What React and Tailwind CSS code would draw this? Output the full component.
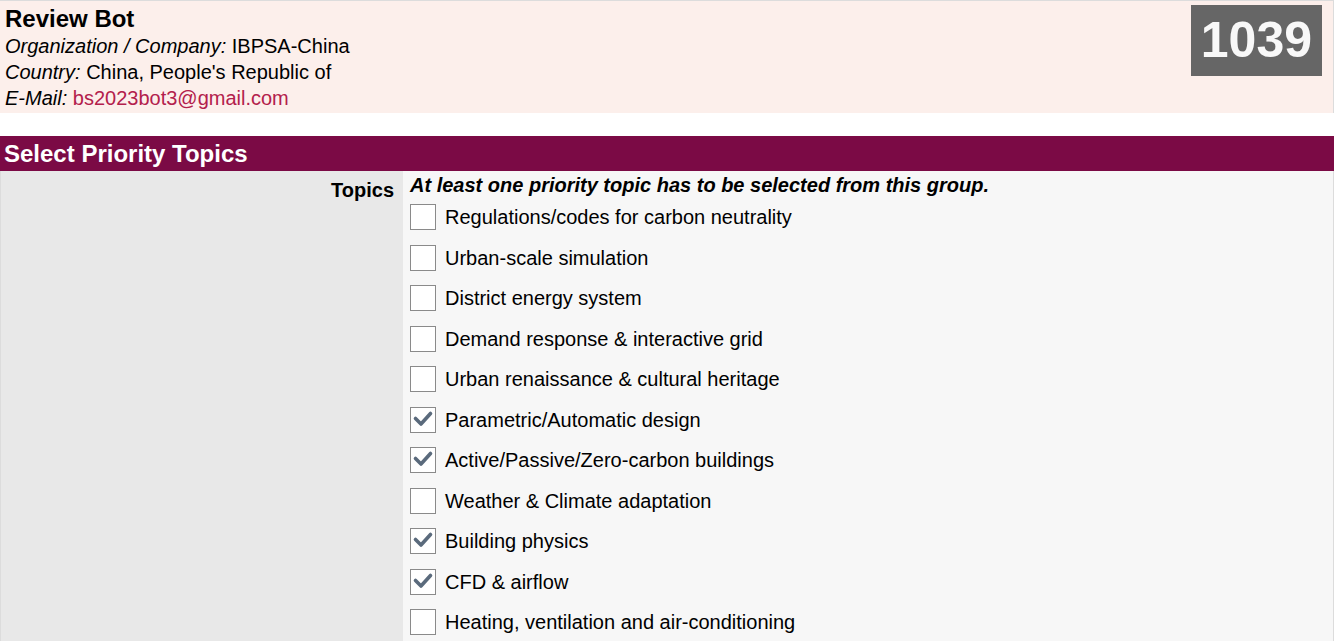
import { useState } from 'react'

const topics = [
    { label: 'Regulations/codes for carbon neutrality', checked: false },
    { label: 'Urban-scale simulation', checked: false },
    { label: 'District energy system', checked: false },
    { label: 'Demand response & interactive grid', checked: false },
    { label: 'Urban renaissance & cultural heritage', checked: false },
    { label: 'Parametric/Automatic design', checked: true },
    { label: 'Active/Passive/Zero-carbon buildings', checked: true },
    { label: 'Weather & Climate adaptation', checked: false },
    { label: 'Building physics', checked: true },
    { label: 'CFD & airflow', checked: true },
    { label: 'Heating, ventilation and air-conditioning', checked: false },
]

function CheckBox({ checked, onToggle }) {
    return (
        <button
            type="button"
            onClick={onToggle}
            className="w-[26px] h-[26px] flex-shrink-0 bg-white border border-[#8a8a8a] flex items-center justify-center"
        >
            {checked && (
                <svg width="24" height="24" viewBox="0 0 24 24">
                    <path d="M4.5 10.5 L10 16 L19.5 5.5" fill="none" stroke="#5a6a7c" strokeWidth="3.6" strokeLinecap="round" strokeLinejoin="round" />
                </svg>
            )}
        </button>
    )
}

export default function App() {
    const [items, setItems] = useState(topics)

    const toggle = (i) => {
        setItems(items.map((t, j) => (j === i ? { ...t, checked: !t.checked } : t)))
    }

    return (
        <div className="min-h-screen bg-white text-black font-['Liberation_Sans',Arial,sans-serif]">
            {/* Header */}
            <div className="flex justify-between items-start bg-[#fcefeb] border-t border-r border-[#dcdcdc] pl-[5px] pr-[11px] pt-[3px] pb-[2px]">
                <div>
                    <h1 className="text-[24px] leading-[29px] font-bold">Review Bot</h1>
                    <p className="text-[20px] leading-[26px]">
                        <i>Organization / Company:</i> IBPSA-China
                    </p>
                    <p className="text-[20px] leading-[26px]">
                        <i>Country:</i> China, People's Republic of
                    </p>
                    <p className="text-[20px] leading-[26px]">
                        <i>E-Mail:</i> <a href="#" className="text-[#b3204c]">bs2023bot3@gmail.com</a>
                    </p>
                </div>
                <div className="mt-[1px] bg-[#666666] text-[#f8f8f8] font-bold text-[50px] leading-[71px] px-[10px]">
                    1039
                </div>
            </div>

            <div className="h-[23px]" />

            {/* Section title */}
            <div className="bg-[#7b0a45] text-white font-bold text-[24px] leading-[35px] pl-[4px]">
                Select Priority Topics
            </div>

            {/* Topics row */}
            <div className="flex border-l border-r border-b border-[#dcdcdc]">
                <div className="w-[402px] flex-shrink-0 bg-[#e8e8e8] text-right pr-[9px] pt-[7px]">
                    <span className="text-[20px] leading-[24px] font-bold">Topics</span>
                </div>
                <div className="flex-1 bg-[#f7f7f7] pl-[7px] pt-[2px]">
                    <p className="text-[20px] leading-[24px] font-bold italic">
                        At least one priority topic has to be selected from this group.
                    </p>
                    {items.map((t, i) => (
                        <label key={t.label} className="flex items-center gap-[9px] h-[40.5px]">
                            <CheckBox checked={t.checked} onToggle={() => toggle(i)} />
                            <span className="text-[20px] leading-[24px]">{t.label}</span>
                        </label>
                    ))}
                </div>
            </div>
        </div>
    )
}
